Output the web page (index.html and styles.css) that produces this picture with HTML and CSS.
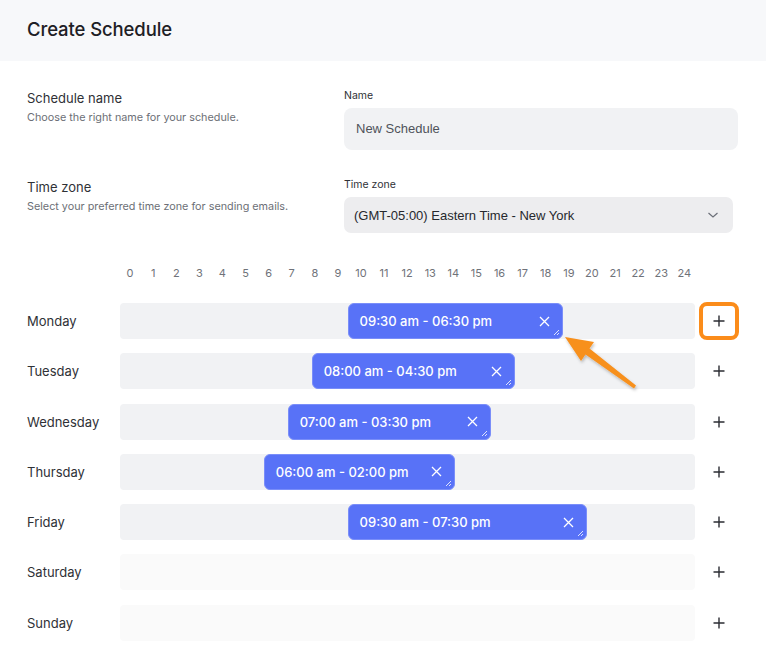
FILE: index.html
```html
<!DOCTYPE html>
<html lang="en">
<head>
  <meta charset="UTF-8">
  <meta name="viewport" content="width=device-width, initial-scale=1.0">
  <title>Create Schedule</title>
  <link rel="stylesheet" href="styles.css">
</head>
<body>
  <div class="page">
    <div class="header">
      <h1>Create Schedule</h1>
    </div>

    <div class="form">
      <div class="form-row">
        <div class="form-info">
          <div class="info-title">Schedule name</div>
          <div class="info-text">Choose the right name for your schedule.</div>
        </div>
        <div class="field">
          <label class="field-label">Name</label>
          <div class="input">New Schedule</div>
        </div>
      </div>

      <div class="form-row row-tz">
        <div class="form-info">
          <div class="info-title">Time zone</div>
          <div class="info-text">Select your preferred time zone for sending emails.</div>
        </div>
        <div class="field field-select">
          <label class="field-label">Time zone</label>
          <div class="select">
            <span>(GMT-05:00) Eastern Time - New York</span>
            <svg width="12" height="8" viewBox="0 0 12 8"><path d="M1.5 2 L6 6 L10.5 2" fill="none" stroke="#6b6f78" stroke-width="1.2"/></svg>
          </div>
        </div>
      </div>
    </div>

    <div class="schedule">
      <div class="hours">
        <span>0</span><span>1</span><span>2</span><span>3</span><span>4</span><span>5</span><span>6</span><span>7</span><span>8</span><span>9</span><span>10</span><span>11</span><span>12</span><span>13</span><span>14</span><span>15</span><span>16</span><span>17</span><span>18</span><span>19</span><span>20</span><span>21</span><span>22</span><span>23</span><span>24</span>
      </div>

      <div class="days" id="days"></div>
    </div>

    <!-- annotation arrow -->
    <svg class="arrow" width="766" height="669" viewBox="0 0 766 669">
      <defs>
        <filter id="shadow" x="-20%" y="-20%" width="140%" height="140%">
          <feDropShadow dx="1" dy="2" stdDeviation="1.5" flood-color="#000" flood-opacity="0.25"/>
        </filter>
      </defs>
      <polygon filter="url(#shadow)" fill="#f7901e" points="565,337 594,342 589.5,348.5 636,385.5 634,388.5 585.5,354.5 581,361"/>
    </svg>
  </div>

  <script>
    const days = [
      { name: 'Monday', from: 9.5, to: 18.5, label: '09:30 am - 06:30 pm', active: true },
      { name: 'Tuesday', from: 8, to: 16.5, label: '08:00 am - 04:30 pm' },
      { name: 'Wednesday', from: 7, to: 15.5, label: '07:00 am - 03:30 pm' },
      { name: 'Thursday', from: 6, to: 14, label: '06:00 am - 02:00 pm' },
      { name: 'Friday', from: 9.5, to: 19.5, label: '09:30 am - 07:30 pm' },
      { name: 'Saturday', empty: true },
      { name: 'Sunday', empty: true }
    ];

    const list = document.getElementById('days');
    const plus = '<svg width="12" height="12" viewBox="0 0 12 12"><path d="M6 0.5 V11.5 M0.5 6 H11.5" stroke="#2b2d33" stroke-width="1.4"/></svg>';
    const close = '<svg width="11" height="11" viewBox="0 0 11 11"><path d="M1 1 L10 10 M10 1 L1 10" stroke="#fff" stroke-width="1.3"/></svg>';

    days.forEach(d => {
      const row = document.createElement('div');
      row.className = 'day';
      let chip = '';
      if (!d.empty) {
        const left = (d.from / 24 * 100).toFixed(3);
        const width = ((d.to - d.from) / 24 * 100).toFixed(3);
        chip = `<div class="chip" style="left:${left}%;width:${width}%">
          <span>${d.label}</span>${close}<i class="grip"></i></div>`;
      }
      row.innerHTML = `
        <div class="day-name">${d.name}</div>
        <div class="track${d.empty ? ' track-empty' : ''}">${chip}</div>
        <button class="add${d.active ? ' add-active' : ''}">${plus}</button>`;
      list.appendChild(row);
    });
  </script>
</body>
</html>
```

FILE: styles.css
```css
body {
  margin: 0;
  font-family: Inter, "Noto Sans", sans-serif;
  background-color: #ffffff;
  color: #25272c;
}

.page {
  position: relative;
  width: 766px;
  height: 669px;
  overflow: hidden;
}

.header {
  height: 58px;
  background-color: #f7f8fa;
  display: flex;
  align-items: center;
  padding: 0 0 3px 27px;
}

.header h1 {
  margin: 0;
  font-size: 18.5px;
  font-weight: 500;
  color: #1e2025;
  letter-spacing: -0.1px;
}

.form {
  padding: 28px 28px 0 27px;
}

.form-row {
  display: grid;
  grid-template-columns: 317px 1fr;
}

.row-tz {
  margin-top: 28px;
}

.form-info {
  padding-top: 1px;
}

.info-title {
  font-size: 13px;
  color: #2f3136;
  line-height: 17px;
}

.info-text {
  font-size: 10.8px;
  color: #6c6f76;
  margin-top: 4px;
  line-height: 14px;
}

.field-label {
  display: block;
  font-size: 10.5px;
  color: #2f3136;
  line-height: 13px;
  margin-bottom: 6px;
}

.input {
  height: 42px;
  box-sizing: border-box;
  padding: 0 12px 1px;
  background-color: #f1f2f4;
  border-radius: 8px;
  display: flex;
  align-items: center;
  font-family: "Liberation Sans", Arial, sans-serif;
  font-size: 13px;
  color: #4f525a;
}

.field-select {
  padding-right: 5px;
}

.select {
  height: 36px;
  background-color: #ededef;
  border-radius: 7px;
  display: flex;
  align-items: center;
  justify-content: space-between;
  padding: 0 14px 0 10px;
  font-family: "Liberation Sans", Arial, sans-serif;
  font-size: 13px;
  color: #26282d;
}

.schedule {
  padding: 0 0 0 27px;
}

.hours {
  display: grid;
  grid-template-columns: repeat(25, 23.1px);
  margin: 33px 0 0 91.5px;
  font-size: 11px;
  color: #6f7279;
  line-height: 14px;
  text-align: center;
}

.days {
  display: flex;
  flex-direction: column;
  gap: 14.3px;
  margin-top: 22px;
}

.day {
  display: grid;
  grid-template-columns: 93px 575px 40px;
  align-items: center;
  height: 36px;
}

.day-name {
  font-size: 13px;
  color: #2f3136;
}

.track {
  position: relative;
  height: 36px;
  background-color: #f1f2f4;
  border-radius: 4px;
}

.track-empty {
  background-color: #fafafa;
}

.chip {
  position: absolute;
  top: 0;
  bottom: 0;
  box-sizing: border-box;
  background-color: #5872f7;
  border: 1px solid #7a8ef9;
  border-radius: 6px;
  display: flex;
  align-items: center;
  justify-content: space-between;
  padding: 0 12px 0 11px;
  color: white;
  font-size: 13px;
  font-weight: 500;
}

.chip .grip {
  position: absolute;
  right: 3px;
  bottom: 3px;
  width: 5px;
  height: 5px;
  background: linear-gradient(135deg, transparent 45%, rgba(255,255,255,0.8) 46%, rgba(255,255,255,0.8) 56%, transparent 57%, transparent 72%, rgba(255,255,255,0.8) 73%, rgba(255,255,255,0.8) 83%, transparent 84%);
}

.add {
  width: 40px;
  height: 38px;
  margin-left: 4px;
  border: none;
  background: none;
  padding: 0;
  display: flex;
  align-items: center;
  justify-content: center;
  cursor: pointer;
  box-sizing: border-box;
}

.add-active {
  border: 4px solid #fb8c1a;
  border-radius: 8px;
}

.arrow {
  position: absolute;
  top: 0;
  left: 0;
  pointer-events: none;
}
```
